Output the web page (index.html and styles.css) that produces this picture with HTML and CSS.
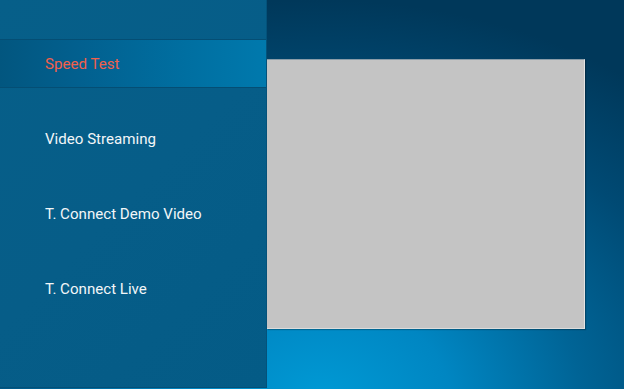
FILE: index.html
```html
<!DOCTYPE html>
<html>
<head>
<meta charset="utf-8">
<link rel="stylesheet" href="styles.css">
</head>
<body>
<div class="app">
  <nav class="sidebar">
    <div class="item active">Speed Test</div>
    <div class="item">Video Streaming</div>
    <div class="item">T. Connect Demo Video</div>
    <div class="item">T. Connect Live</div>
  </nav>
  <div class="content">
    <div class="screen"></div>
  </div>
</div>
</body>
</html>
```
FILE: styles.css
```css
html, body {
  margin: 0;
  padding: 0;
  width: 624px;
  height: 389px;
  overflow: hidden;
}
body {
  font-family: Roboto, "Liberation Sans", sans-serif;
  background: radial-gradient(ellipse 520px 400px at 320px 400px, #009ad5 0%, #0086c2 25%, #006496 50%, #004a74 75%, #00385a 100%);
}
.app {
  display: flex;
  height: 389px;
}
.sidebar {
  width: 267px;
  height: 387px;
  border-right: 1px solid #04527a;
  background: linear-gradient(135deg, #065f89 0%, #065d88 50%, #045b86 100%);
  display: flex;
  flex-direction: column;
  gap: 26px;
  padding-top: 39px;
  box-sizing: border-box;
  box-shadow: 0 1px 0 #045078;
}
.item {
  height: 49px;
  display: flex;
  align-items: center;
  padding-left: 45px;
  font-size: 15.1px;
  color: #f2f6f8;
  box-sizing: border-box;
}
.item.active {
  color: #f2604b;
  background: linear-gradient(90deg, #02567f 0%, #02608f 30%, #006fa1 70%, #0079ad 100%);
  border-top: 1px solid #044e74;
  border-bottom: 1px solid #044e74;
}
.content {
  padding-top: 59px;
}
.screen {
  width: 318px;
  height: 270px;
  background: #c4c4c4;
  box-sizing: border-box;
  border-top: 1px solid #8a9ca8;
  border-right: 1px solid #e4e4e4;
  border-bottom: 1px solid #dcdcdc;
  box-shadow: 1px 1px 1px rgba(0,0,0,0.25);
}
```
